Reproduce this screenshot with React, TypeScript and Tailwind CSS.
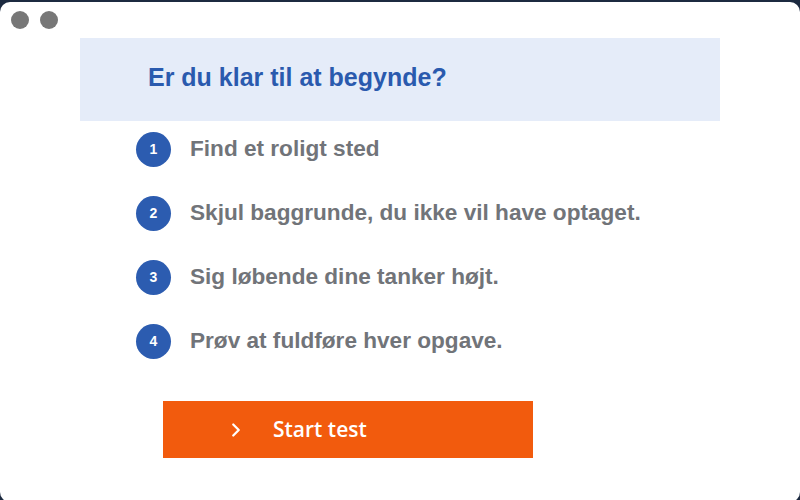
import { ChevronRight } from "lucide-react";

const steps = [
    "Find et roligt sted",
    "Skjul baggrunde, du ikke vil have optaget.",
    "Sig løbende dine tanker højt.",
    "Prøv at fuldføre hver opgave.",
];

// Lille cirkel med nummer
const StepBadge = ({ n }: { n: number }) => (
    <div className="w-[35px] h-[35px] rounded-full bg-[#2c5cb0] flex items-center justify-center text-white text-[14px] font-bold shrink-0">
        {n}
    </div>
);

export default function App() {
    return (
        <div className="w-[800px] h-[500px] bg-[#1c2a40] overflow-hidden">
            <div className="w-full h-full bg-white rounded-[10px] mt-[2px] relative font-['Liberation_Sans',Arial,sans-serif]">
                <div className="flex gap-[11px] pl-[11px] pt-[9px]">
                    <span className="w-[18px] h-[18px] rounded-full bg-[#777]" />
                    <span className="w-[18px] h-[18px] rounded-full bg-[#777]" />
                </div>
                <div className="ml-[80px] mt-[9px] w-[640px] h-[83px] bg-[#e5ecf9] flex items-center pl-[68px]">
                    <h1 className="text-[25px] font-bold text-[#2a5aae] -mt-[4px]">
                        Er du klar til at begynde?
                    </h1>
                </div>
                <ul className="ml-[136px] mt-[11px] flex flex-col gap-[29px]">
                    {steps.map((s, i) => (
                        <li key={i} className="flex items-center gap-[19px]">
                            <StepBadge n={i + 1} />
                            <span className="text-[22.6px] font-bold text-[#717479] -mt-[2px]">{s}</span>
                        </li>
                    ))}
                </ul>
                <button className="ml-[163px] mt-[42px] w-[370px] h-[57px] bg-[#f25b0d] flex items-center text-white">
                    <ChevronRight className="ml-[62px] w-[22px] h-[22px]" strokeWidth={2.5} />
                    <span className="ml-[26px] text-[21px] font-['Open_Sans',sans-serif] font-semibold">
                        Start test
                    </span>
                </button>
            </div>
        </div>
    );
}
